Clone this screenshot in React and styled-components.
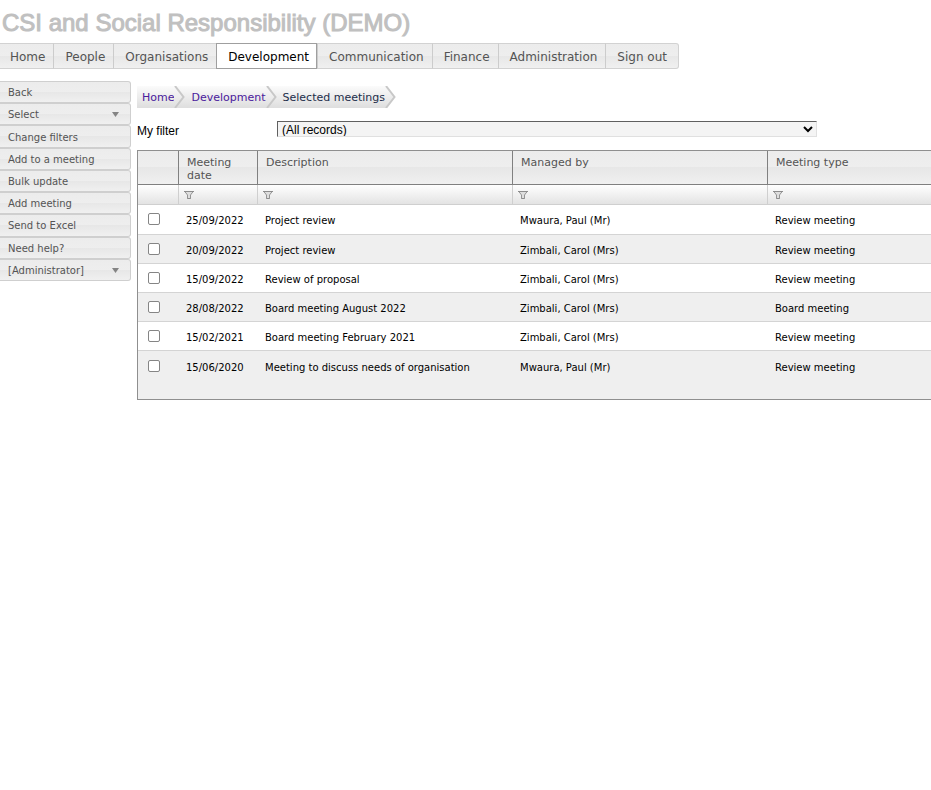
import React from "react";
import styled, { createGlobalStyle } from "styled-components";

const GlobalStyle = createGlobalStyle`
  * { box-sizing: border-box; }
  body {
    margin: 0;
    background: #fff;
    color: #000;
    font-family: Verdana, "DejaVu Sans", sans-serif;
    font-size: 10px;
    overflow-x: hidden;
  }
`;

const glossy = "linear-gradient(#ececec 0, #eeeeee 50%, #e7e7e7 50%, #f0f0f0 100%)";

const Title = styled.h1`
  margin: 0;
  padding: 8px 2px 5px;
  font: normal 24px/30px "Liberation Sans", Arial, sans-serif;
  color: #c0c0c0;
  -webkit-text-stroke: 1px #c0c0c0;
  white-space: nowrap;
`;

const MainMenu = styled.nav`
  display: flex;
  width: max-content;
  height: 26px;
  border: 1px solid #d2d2d2;
  border-left: 0;
  border-radius: 0 3px 3px 0;
  background: ${glossy};
`;

const MenuLink = styled.a`
  padding: 1px 7px 0 11px;
  margin: -1px 0;
  border: 1px solid ${(p) => (p.$active ? "#9f9f9f" : "transparent")};
  border-left-color: ${(p) => (p.$active ? "#9f9f9f" : "#cccccc")};
  background: ${(p) => (p.$active ? "#fff" : "transparent")};
  color: ${(p) => (p.$active ? "#000" : "#545454")};
  font-size: 12px;
  line-height: 24px;
  text-decoration: none;
  white-space: nowrap;
  &:first-child { border-left: 0; padding-left: 10px; }
  &:last-child { padding-right: 10px; }
`;

const Columns = styled.div`
  display: grid;
  grid-template-columns: 131px minmax(0, 1fr);
  column-gap: 6px;
  align-items: start;
  margin-top: 12px;
`;

const SideMenu = styled.nav`
  display: grid;
  grid-auto-rows: 1fr;
  min-height: 200px;
`;

const SideButton = styled.button`
  display: flex;
  align-items: center;
  justify-content: space-between;
  padding: 1px 11px 0 8px;
  border: 1px solid #cfcfcf;
  border-left: 0;
  border-radius: 0 3px 3px 0;
  background: ${glossy};
  color: #545454;
  font: inherit;
  text-align: left;
`;

const Content = styled.main`
  padding-top: 5px;
`;

const Crumbs = styled.nav`
  display: flex;
  height: 22px;
`;

const Crumb = styled.a`
  padding: 1px 0 0 6px;
  background: linear-gradient(#fbfbfb, #dedede);
  color: ${(p) => (p.$current ? "#1c2e4a" : "#4a209c")};
  font-size: 11px;
  line-height: 21px;
  text-decoration: none;
  white-space: nowrap;
  &:first-child { padding-left: 5px; }
`;

const FilterLine = styled.div`
  display: grid;
  grid-template-columns: 140px minmax(0, 540px);
  margin-top: 13px;
  height: 29px;
  font: 12px/20px "Liberation Sans", Arial, sans-serif;
`;

const FilterSelect = styled.select`
  width: 100%;
  height: 16px;
  padding: 0;
  border: 1px solid #e0e0e0;
  border-top-color: #606060;
  border-left-color: #606060;
  border-radius: 0;
  background: #f4f4f4;
  color: #000;
  font: 12px "Liberation Sans", Arial, sans-serif;
`;

const Grid = styled.table`
  width: 100%;
  table-layout: fixed;
  border-collapse: separate;
  border-spacing: 0;
  border: 1px solid #8f8f8f;
  border-right: 0;
`;

const Col = styled.col`
  width: ${(p) => (p.$w ? p.$w + "px" : "auto")};
`;

const HeadCell = styled.th`
  height: 34px;
  padding: 5px 8px 2px;
  border-left: 1px solid #808080;
  border-bottom: 1px solid #808080;
  background: ${glossy};
  color: #545454;
  font-size: 11px;
  font-weight: normal;
  line-height: 13px;
  text-align: left;
  vertical-align: top;
  &:first-child { border-left: 0; }
`;

const FilterCell = styled.td`
  height: 20px;
  padding: 0 5px;
  border-left: 1px solid #cfcfcf;
  border-bottom: 1px solid #cfcfcf;
  background: linear-gradient(#fff, #e3e3e3);
  &:first-child { border-left: 0; }
`;

const FilterButton = styled.button`
  display: block;
  padding: 0;
  border: 0;
  background: none;
`;

const Row = styled.tr`
  height: 29px;
  background: ${(p) => (p.$shaded ? "#efefef" : "#fff")};
  &:first-child { height: 30px; }
`;

const Cell = styled.td`
  padding: 3px 7px 0 8px;
  border-bottom: 1px solid #d4d4d4;
  line-height: 14px;
  white-space: nowrap;
  ${Row}:last-child & {
    height: 48px;
    padding-bottom: 18px;
    border-bottom: 0;
  }
`;

const Tick = styled.input`
  display: block;
  width: 12px;
  height: 12px;
  margin: 0 0 4px 2px;
  appearance: none;
  border: 1px solid #858585;
  border-radius: 2px;
  background: #fff;
  &:checked { background: #767676; }
`;

const MENU = ["Home", "People", "Organisations", "Development", "Communication", "Finance", "Administration", "Sign out"];
const ACTIONS = ["Back", "Select", "Change filters", "Add to a meeting", "Bulk update", "Add meeting", "Send to Excel", "Need help?", "[Administrator]"];
const WITH_MENU = ["Select", "[Administrator]"];
const CRUMBS = ["Home", "Development", "Selected meetings"];
const HEADS = ["Meeting date", "Description", "Managed by", "Meeting type"];
const MEETINGS = [
  ["25/09/2022", "Project review", "Mwaura, Paul (Mr)", "Review meeting"],
  ["20/09/2022", "Project review", "Zimbali, Carol (Mrs)", "Review meeting"],
  ["15/09/2022", "Review of proposal", "Zimbali, Carol (Mrs)", "Review meeting"],
  ["28/08/2022", "Board meeting August 2022", "Zimbali, Carol (Mrs)", "Board meeting"],
  ["15/02/2021", "Board meeting February 2021", "Zimbali, Carol (Mrs)", "Review meeting"],
  ["15/06/2020", "Meeting to discuss needs of organisation", "Mwaura, Paul (Mr)", "Review meeting"],
];

const DownArrow = () => (
  <svg width="7" height="5" viewBox="0 0 7 5" aria-hidden="true"><path d="M0 0h7L3.5 5z" fill="#848484" /></svg>
);

const CrumbArrow = ({ last }) => (
  <svg width="11" height="22" viewBox="0 0 11 22" aria-hidden="true">
    <defs>
      <linearGradient id="crumb" gradientUnits="userSpaceOnUse" x1="0" y1="0" x2="0" y2="22">
        <stop stopColor="#fbfbfb" /><stop offset="1" stopColor="#dedede" />
      </linearGradient>
    </defs>
    <path d={last ? "M0 0h1l9 11-9 11H0z" : "M0 0h11v22H0z"} fill="url(#crumb)" />
    <path d="M1 0l8.500 11L1 22" fill="none" stroke="#c8c8c8" strokeWidth="2" />
  </svg>
);

const Funnel = () => (
  <svg width="10" height="8" viewBox="0 0 10 8" aria-hidden="true">
    <path d="M.8.500h8.400L6.500 4v3.500h-3V4z" fill="#dedede" stroke="#949494" />
    <path d="M0 .5h10M3.500 7.500h3" fill="none" stroke="#8c8c8c" />
  </svg>
);

export default function App() {
  return (
    <>
      <GlobalStyle />
      <Title>CSI and Social Responsibility (DEMO)</Title>
      <MainMenu>
        {MENU.map((m) => <MenuLink key={m} href="#" $active={m === "Development"}>{m}</MenuLink>)}
      </MainMenu>
      <Columns>
        <SideMenu>
          {ACTIONS.map((a) => (
            <SideButton key={a} type="button">{a}{WITH_MENU.includes(a) && <DownArrow />}</SideButton>
          ))}
        </SideMenu>
        <Content>
          <Crumbs>
            {CRUMBS.map((c, i) => (
              <React.Fragment key={c}>
                <Crumb href="#" $current={i === CRUMBS.length - 1}>{c}</Crumb>
                <CrumbArrow last={i === CRUMBS.length - 1} />
              </React.Fragment>
            ))}
          </Crumbs>
          <FilterLine>
            <label htmlFor="my-filter">My filter</label>
            <FilterSelect id="my-filter"><option>(All records)</option></FilterSelect>
          </FilterLine>
          <Grid>
            <colgroup><Col $w={40} /><Col $w={79} /><Col $w={255} /><Col $w={255} /><Col /></colgroup>
            <thead>
              <tr>
                <HeadCell aria-label="Selection" />
                {HEADS.map((h) => <HeadCell key={h} scope="col">{h}</HeadCell>)}
              </tr>
              <tr>
                <FilterCell />
                {HEADS.map((h) => (
                  <FilterCell key={h}><FilterButton type="button" aria-label={"Filter by " + h}><Funnel /></FilterButton></FilterCell>
                ))}
              </tr>
            </thead>
            <tbody>
              {MEETINGS.map((m, i) => (
                <Row key={m[0]} $shaded={i % 2 === 1}>
                  <Cell><Tick type="checkbox" aria-label={"Select meeting of " + m[0]} /></Cell>
                  {m.map((v, j) => <Cell key={j}>{v}</Cell>)}
                </Row>
              ))}
            </tbody>
          </Grid>
        </Content>
      </Columns>
    </>
  );
}
